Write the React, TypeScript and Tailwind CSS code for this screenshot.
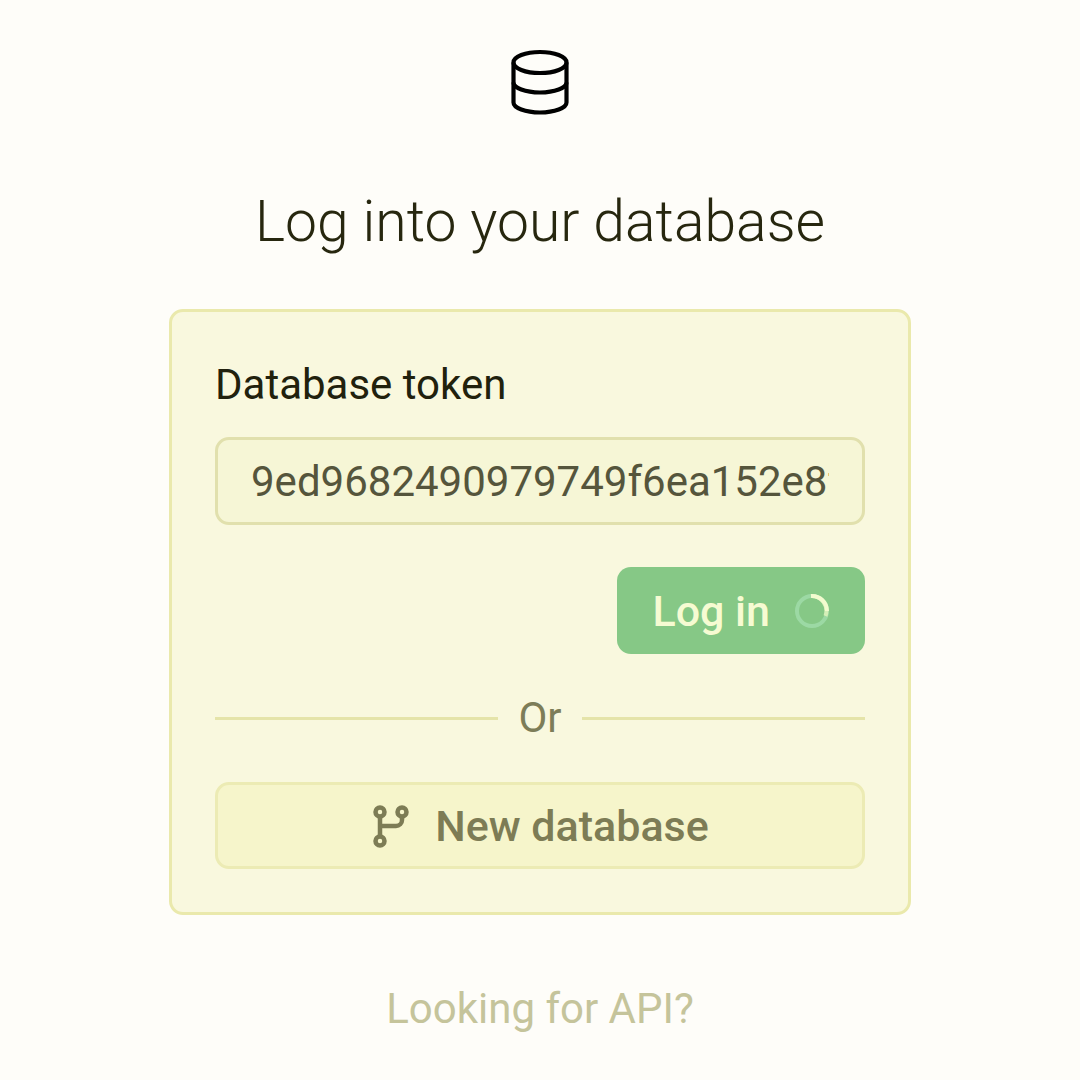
import { useState } from "react";

function DatabaseIcon() {
  return (
    <svg className="h-17 w-17" viewBox="0 0 68 68" fill="none" stroke="#000" strokeWidth="4.200" aria-hidden="true">
      <ellipse cx="34" cy="14.500" rx="26.500" ry="10.500" />
      <path d="M7.500 14.500v40c0 5.500 11.900 10 26.500 10s26.500-4.500 26.500-10v-40" />
      <path d="M7.500 34.500c0 5.500 11.900 10 26.500 10s26.500-4.500 26.500-10" />
    </svg>
  );
}

function BranchIcon() {
  return (
    <svg className="h-11 w-10" viewBox="0 0 40 44" fill="none" stroke="currentColor" strokeWidth="4.500" aria-hidden="true">
      <circle cx="9" cy="8" r="4.500" />
      <circle cx="31" cy="8" r="4.500" />
      <circle cx="9" cy="37" r="4.500" />
      <path d="M9 12.500v20M31 12.500v3.500a6 6 0 0 1-6 6H9" />
    </svg>
  );
}

function Spinner() {
  return (
    <svg className="h-9 w-9" viewBox="0 0 36 36" fill="none" strokeWidth="4" aria-hidden="true">
      <circle cx="18" cy="18" r="15" stroke="#9cd9a4" />
      <path d="M17 3a15 15 0 0 1 14.500 20" stroke="#d5efb8" />
      <path d="M17 3a15 15 0 0 1 16 15" stroke="#f3fbcf" />
    </svg>
  );
}

export default function App() {
  const [token, setToken] = useState("9ed9682490979749f6ea152e8f3c");

  return (
    <main className="flex min-h-screen flex-col items-center bg-[#fefdf9] px-6 pt-12 pb-10 font-['Roboto',sans-serif] text-[42px] leading-[48px]">
      <DatabaseIcon />
      <h1 className="mt-17 text-center text-[57px] leading-[76px] font-light text-[#27270f]">Log into your database</h1>
      <section className="mt-[49px] w-full max-w-[742px] rounded-[14px] border-3 border-[#eae9ac] bg-[#f9f8de] p-[43px]">
        <form onSubmit={(event) => event.preventDefault()}>
          <label htmlFor="token" className="mt-1.5 block text-[#21210d]">
            Database token
          </label>
          <input
            id="token"
            value={token}
            onChange={(event) => setToken(event.target.value)}
            className="mt-7 block h-[88px] w-full rounded-[14px] border-3 border-[#e1e0ad] bg-[#f6f6d6] px-[33px] text-[#55553c] outline-none"
          />
          <button
            type="submit"
            className="mt-[42px] ml-auto flex h-[87px] items-center gap-6 rounded-[14px] bg-[#86c886] px-[35px] text-[43px] font-medium text-[#f6fbd2]"
          >
            Log in
            <Spinner />
          </button>
        </form>
        <div className="my-10 flex items-center gap-5 text-[#7d7d58]">
          <span className="h-[3px] flex-1 bg-[#e5e4a9]" />
          Or
          <span className="h-[3px] flex-1 bg-[#e5e4a9]" />
        </div>
        <button
          type="button"
          className="flex h-[87px] w-full items-center justify-center gap-6 rounded-[14px] border-3 border-[#ecebb4] bg-[#f6f5cb] text-[43px] font-medium text-[#7d7c55]"
        >
          <BranchIcon />
          New database
        </button>
      </section>
      <a href="#api" className="mt-[70px] text-[#c5c49b]">
        Looking for API?
      </a>
    </main>
  );
}
